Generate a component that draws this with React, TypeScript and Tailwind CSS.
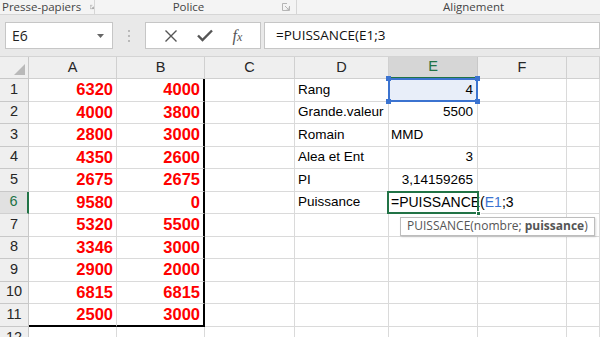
import React from "react";

const A = [6320, 4000, 2800, 4350, 2675, 9580, 5320, 3346, 2900, 6815, 2500];
const B = [4000, 3800, 3000, 2600, 2675, 0, 5500, 3000, 2000, 6815, 3000];
const D = ["Rang", "Grande.valeur", "Romain", "Alea et Ent", "PI", "Puissance"];
const E: { v: string; left?: boolean }[] = [
  { v: "4" },
  { v: "5500" },
  { v: "MMD", left: true },
  { v: "3" },
  { v: "3,14159265" },
];

const Launcher = ({ c }: { c: string }) => (
  <svg width="8" height="8" viewBox="0 0 8 8">
    <path d="M0.5 0.5 H5 M0.5 0.5 V7.5 H7.5 V3" stroke={c} strokeWidth="1" fill="none" />
    <path d="M3 3 L7 7 M7 4.5 V7 H4.5" stroke={c} strokeWidth="1" fill="none" />
  </svg>
);

const cellBase = "border-r border-b border-[#dadada] flex items-center whitespace-nowrap";
const numCls = "justify-end pr-[3px] text-[16.5px] font-bold text-[#ff0000]";
const txtCls = "text-[13.5px] text-black";

export default function App() {
  const cells: React.ReactNode[] = [];
  cells.push(
    <div key="corner" className="bg-[#efefef] border-r border-b border-[#c8c8c8] flex items-end justify-end pr-[3px] pb-[3px]">
      <svg width="11" height="11" viewBox="0 0 11 11">
        <path d="M11 0 L11 11 L0 11 Z" fill="#b9b9b9" />
      </svg>
    </div>
  );
  ["A", "B", "C", "D", "E", "F", ""].forEach((l) => {
    const sel = l === "E";
    cells.push(
      <div
        key={"h" + l}
        className={
          sel
            ? "bg-[#d6d6d6] border-r border-[#c8c8c8] border-b-2 border-b-[#217346] flex items-center justify-center text-[14.5px] text-[#217346]"
            : "bg-[#efefef] border-r border-b border-[#d0d0d0] flex items-center justify-center text-[14.5px] text-[#262626]"
        }
      >
        {l}
      </div>
    );
  });

  for (let r = 0; r < 12; r++) {
    const rowSel = r === 5;
    cells.push(
      <div
        key={"r" + r}
        className={
          rowSel
            ? "bg-[#e1e1e1] border-b border-[#d0d0d0] border-r-2 border-r-[#217346] flex items-center justify-center text-[14.5px] text-[#217346]"
            : r === 11
            ? "bg-[#efefef] border-b border-r border-[#c8c8c8] flex items-start pt-[3px] justify-center text-[14.5px] leading-none text-[#262626]"
            : "bg-[#efefef] border-b border-r border-[#c8c8c8] flex items-center justify-center text-[14.5px] text-[#262626]"
        }
      >
        {r + 1}
      </div>
    );
    const last = r === 10;
    cells.push(
      <div
        key={"a" + r}
        className={`${cellBase} ${r < 11 ? numCls : ""} ${last ? "border-b-2 border-b-black" : ""}`}
      >
        {r < 11 ? A[r] : ""}
      </div>
    );
    cells.push(
      <div
        key={"b" + r}
        className={`${cellBase} ${r < 11 ? numCls + " border-r-2 border-r-black" : ""} ${last ? "border-b-2 border-b-black" : ""}`}
      >
        {r < 11 ? B[r] : ""}
      </div>
    );
    cells.push(<div key={"c" + r} className={cellBase} />);
    cells.push(
      <div key={"d" + r} className={`${cellBase} ${txtCls} pl-[3px]`}>
        {D[r] ?? ""}
      </div>
    );
    if (r === 0) {
      cells.push(
        <div key="e0" className={`${cellBase} ${txtCls} justify-end pr-[4px] bg-[#e8eef9] relative`}>
          4
          <div className="absolute inset-[-1px] border-2 border-[#3b73d0] pointer-events-none" />
          <div className="absolute left-[-3px] top-[-3px] w-[5px] h-[5px] bg-[#3b73d0]" />
          <div className="absolute right-[-3px] top-[-3px] w-[5px] h-[5px] bg-[#3b73d0]" />
          <div className="absolute left-[-3px] bottom-[-3px] w-[5px] h-[5px] bg-[#3b73d0]" />
          <div className="absolute right-[-3px] bottom-[-3px] w-[5px] h-[5px] bg-[#3b73d0]" />
        </div>
      );
    } else if (r < 5) {
      const e = E[r];
      cells.push(
        <div
          key={"e" + r}
          className={`${cellBase} ${txtCls} ${e.left ? "pl-[2px]" : "justify-end pr-[4px]"}`}
        >
          {e.v}
        </div>
      );
    } else if (r === 5) {
      cells.push(
        <div key="e5" className={`${cellBase} relative z-10 text-[14px] text-black pl-[2px]`}>
          <span>=PUISSANCE(</span>
          <span className="text-[#3b73d0]">E1</span>
          <span>;3</span>
          <span className="inline-block w-[1px] h-[17px] bg-black ml-[1px]" />
          <div className="absolute left-[-2px] top-[-1px] w-[92px] h-[23.5px] border-2 border-[#217346] pointer-events-none" />
          <div className="absolute left-[87px] top-[19px] w-[5px] h-[5px] bg-[#217346] border border-white" />
          <div
            className="absolute left-[11px] top-[25px] h-[19px] px-[6px] flex items-center bg-white border border-[#bdbdbd] shadow-[1px_1px_2px_rgba(0,0,0,0.15)] text-[12px] text-[#555555]"
            style={{ fontFamily: '"Open Sans", "Noto Sans", sans-serif' }}
          >
            PUISSANCE(nombre; <span className="font-bold ml-[3px]">puissance</span>)
          </div>
        </div>
      );
    } else {
      cells.push(<div key={"e" + r} className={cellBase} />);
    }
    cells.push(<div key={"f" + r} className={`${cellBase} bg-white`} />);
    cells.push(<div key={"g" + r} className={`${cellBase} bg-white`} />);
  }

  return (
    <div
      className="w-[600px] h-[337px] overflow-hidden bg-white flex flex-col"
      style={{ fontFamily: '"Liberation Sans", Arial, sans-serif' }}
    >
      <div
        className="h-[15px] shrink-0 bg-[#f4f4f4] border-b border-[#d6d6d6] flex items-center text-[11.5px] leading-[14px] text-[#444444] whitespace-nowrap"
        style={{ fontFamily: '"Open Sans", "Noto Sans", sans-serif' }}
      >
        <div className="w-[95px] h-full flex items-center pl-[2px] gap-[9px] border-r border-[#d6d6d6]">
          <span>Presse-papiers</span>
          <Launcher c="#8a8a8a" />
        </div>
        <div className="w-[202px] h-full flex items-center border-r border-[#d6d6d6]">
          <span className="flex-1 text-center">Police</span>
          <div className="pr-[6px] flex items-center">
            <Launcher c="#b5b5b5" />
          </div>
        </div>
        <div className="flex-1 h-full flex items-center pl-[146px]">
          <span>Alignement</span>
        </div>
      </div>

      <div
        className="h-[42px] shrink-0 bg-[#e9e9e9] flex items-center pl-[5px] border-b border-[#d4d4d4]"
        style={{ fontFamily: '"Open Sans", "Noto Sans", sans-serif' }}
      >
        <div className="w-[108px] h-[27px] bg-white border border-[#c6c6c6] flex items-center justify-between pl-[6px] pr-[8px] text-[14px] text-[#222222]">
          <span>E6</span>
          <svg width="7" height="4" viewBox="0 0 7 4">
            <path d="M0 0 H7 L3.5 4 Z" fill="#666666" />
          </svg>
        </div>
        <div className="w-[32px] flex flex-col items-center gap-[3px]">
          <div className="w-[2px] h-[2px] rounded-full bg-[#a8a8a8]" />
          <div className="w-[2px] h-[2px] rounded-full bg-[#a8a8a8]" />
          <div className="w-[2px] h-[2px] rounded-full bg-[#a8a8a8]" />
        </div>
        <div className="w-[116px] h-[27px] bg-white border border-[#c6c6c6] flex items-center justify-around px-[8px]">
          <svg width="14" height="14" viewBox="0 0 14 14">
            <path d="M1.5 1.5 L12.5 12.5 M12.5 1.5 L1.5 12.5" stroke="#555555" strokeWidth="1.4" />
          </svg>
          <svg width="16" height="13" viewBox="0 0 16 13">
            <path d="M1 6.5 L5.5 11 L15 1.5" stroke="#555555" strokeWidth="2.4" fill="none" />
          </svg>
          <span
            className="italic text-[16px] text-[#555555] leading-none"
            style={{ fontFamily: '"Liberation Serif", "Times New Roman", serif' }}
          >
            f<span className="text-[12px]">x</span>
          </span>
        </div>
        <div className="flex-1 ml-[3px] h-[27px] bg-white border border-[#c6c6c6] flex items-center pl-[11px] text-[13.5px] text-[#111111]">
          =PUISSANCE(E1;3
        </div>
      </div>

      <div className="grid grid-cols-[29px_88px_88px_90px_94px_89px_89px_33px] grid-rows-[22px_repeat(12,22.5px)]">
        {cells}
      </div>
    </div>
  );
}
